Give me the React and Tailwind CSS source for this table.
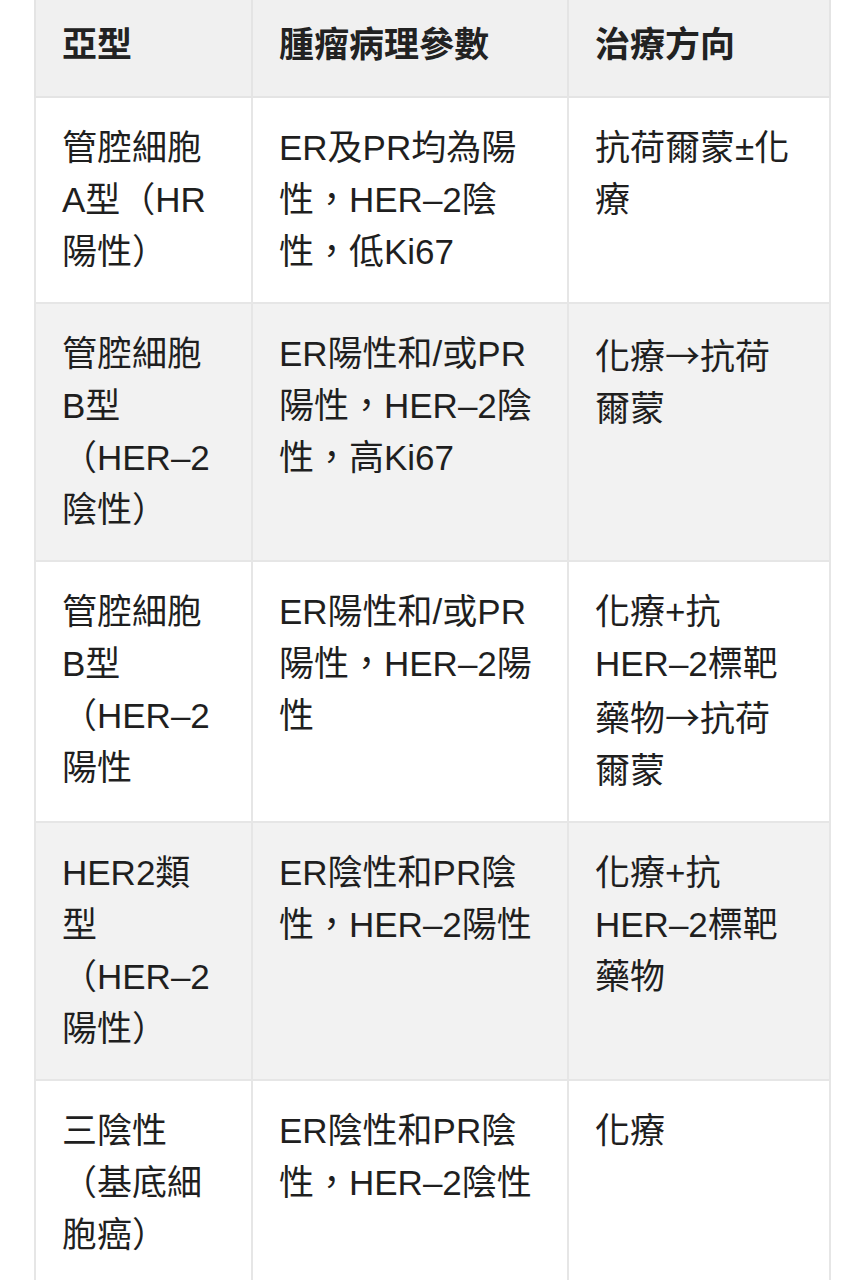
const rows = [
  {
    type: ['管腔細胞', 'A型（HR', '陽性）'],
    params: ['ER及PR均為陽', '性，HER–2陰', '性，低Ki67'],
    treat: ['抗荷爾蒙±化', '療'],
  },
  {
    type: ['管腔細胞', 'B型', '（HER–2', '陰性）'],
    params: ['ER陽性和/或PR', '陽性，HER–2陰', '性，高Ki67'],
    treat: ['化療→抗荷', '爾蒙'],
  },
  {
    type: ['管腔細胞', 'B型', '（HER–2', '陽性'],
    params: ['ER陽性和/或PR', '陽性，HER–2陽', '性'],
    treat: ['化療+抗', 'HER–2標靶', '藥物→抗荷', '爾蒙'],
  },
  {
    type: ['HER2類', '型', '（HER–2', '陽性）'],
    params: ['ER陰性和PR陰', '性，HER–2陽性'],
    treat: ['化療+抗', 'HER–2標靶', '藥物'],
  },
  {
    type: ['三陰性', '（基底細', '胞癌）'],
    params: ['ER陰性和PR陰', '性，HER–2陰性'],
    treat: ['化療'],
  },
];

// arrows look full-width in the shot, so draw them with the CJK face
function Line({ text }) {
  const parts = text.split('→');
  return (
    <span className="block whitespace-nowrap">
      {parts.map((p, i) => (
        <span key={i}>
          {i > 0 && <span className="font-['Noto_Sans_CJK_TC',sans-serif]">→</span>}
          {p}
        </span>
      ))}
    </span>
  );
}

export default function App() {
  return (
    <div className="min-h-[1280px] overflow-hidden bg-white px-[34px] font-['Liberation_Sans','Noto_Sans_CJK_TC',sans-serif] text-[35px] leading-[52px] text-[#1f1f1f]">
      <table className="w-[795px] table-fixed border-collapse">
        <colgroup>
          <col className="w-[217px]" />
          <col className="w-[316px]" />
          <col className="w-[262px]" />
        </colgroup>
        <thead>
          <tr className="bg-[#f0f0f0]">
            {['亞型', '腫瘤病理參數', '治療方向'].map((h) => (
              <th
                key={h}
                className="border-2 border-t-0 border-[#e4e4e4] px-[26px] pt-[19px] pb-[25px] text-left font-bold text-[#222]"
              >
                {h}
              </th>
            ))}
          </tr>
        </thead>
        <tbody>
          {rows.map((r, i) => (
            <tr key={i} className={i % 2 === 1 ? 'bg-[#f2f2f2]' : 'bg-white'}>
              {[r.type, r.params, r.treat].map((cell, j) => (
                <td key={j} className="border-2 border-[#e6e6e6] px-[26px] py-[24px] align-top">
                  {cell.map((line, k) => (
                    <Line key={k} text={line} />
                  ))}
                </td>
              ))}
            </tr>
          ))}
        </tbody>
      </table>
    </div>
  );
}
